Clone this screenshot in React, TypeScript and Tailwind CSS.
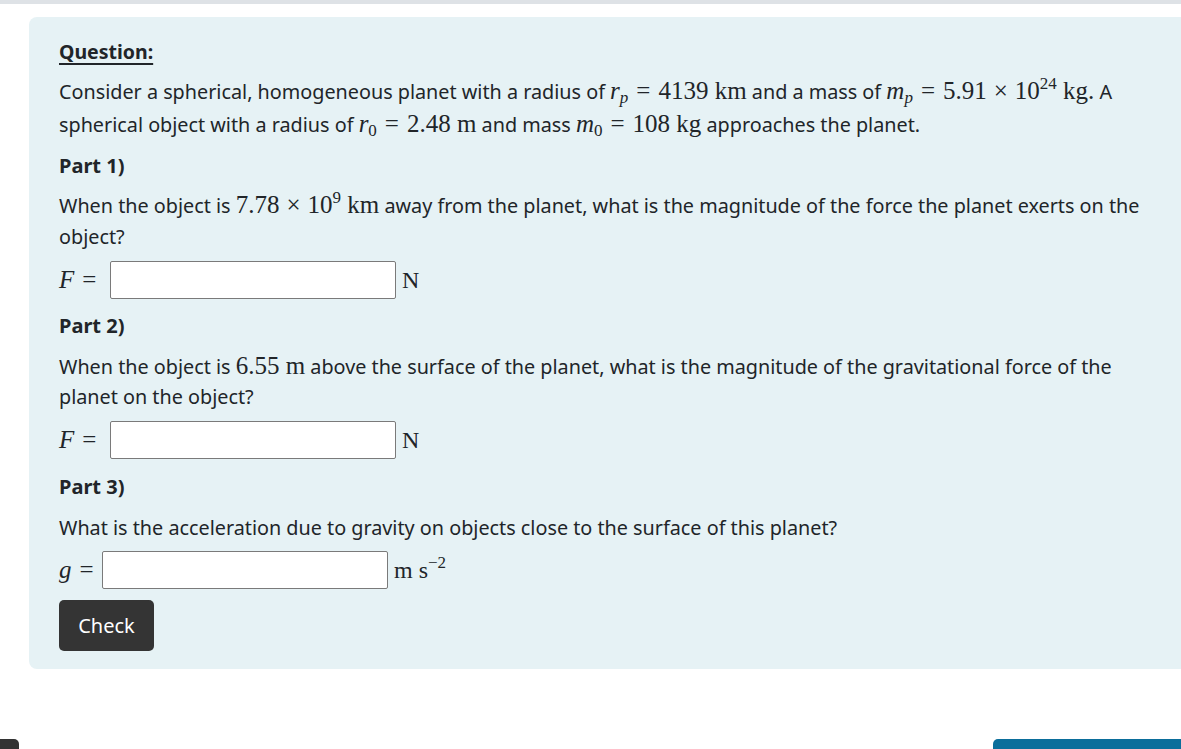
import React from "react";

const serif = "font-['Liberation_Serif','Times_New_Roman',serif]";

function M({ children }: { children: React.ReactNode }) {
  return <span className={`${serif} text-[25px] leading-none whitespace-nowrap`}>{children}</span>;
}

function V({ children }: { children: React.ReactNode }) {
  return <i className="italic">{children}</i>;
}

// relation / binary operator with KaTeX-like spacing
function Op({ children, bin }: { children: React.ReactNode; bin?: boolean }) {
  return <span className={bin ? "mx-[7px]" : "mx-[8px]"}>{children}</span>;
}

function Sub({ children, italic }: { children: React.ReactNode; italic?: boolean }) {
  return (
    <sub className={`text-[17px] relative top-[4px] align-baseline ${italic ? "italic" : ""}`}>{children}</sub>
  );
}

function Sup({ children }: { children: React.ReactNode }) {
  return <sup className="text-[17px] relative -top-[10px] align-baseline">{children}</sup>;
}

function AnswerRow({
  label,
  unit,
  labelWidth,
  top,
}: {
  label: React.ReactNode;
  unit: React.ReactNode;
  labelWidth: string;
  top: string;
}) {
  return (
    <div className={`flex items-center h-[38px] ${top}`}>
      <span className={`${serif} text-[25px] shrink-0 whitespace-nowrap ${labelWidth}`}>{label}</span>
      <input
        type="text"
        className="w-[286px] h-[38px] bg-white border border-[#7a7a7a] rounded-[2px] outline-none px-2"
      />
      <span className={`${serif} text-[24px] pl-[6px]`}>{unit}</span>
    </div>
  );
}

function PartTitle({ children, top }: { children: React.ReactNode; top: string }) {
  return <h3 className={`font-bold text-[20px] leading-[30px] ${top}`}>{children}</h3>;
}

export default function App() {
  return (
    <div className="w-[1181px] h-[749px] bg-white overflow-hidden relative font-['Noto_Sans',sans-serif] text-[#212529]">
      <div className="h-[4px] bg-[#dee2e6]" />
      <div className="ml-[29px] mt-[13px] w-[1170px] rounded-[8px] bg-[#e6f2f5] pl-[30px] pr-[40px] pt-[20px] pb-[18px]">
        <h2 className="font-bold text-[19.5px] leading-[30px] underline underline-offset-[4px] decoration-[2px]">Question:</h2>
        <p className="text-[19.8px] leading-[33px] mt-[8px] w-[1090px]">
          Consider a spherical, homogeneous planet with a radius of{" "}
          <M>
            <V>r</V>
            <Sub italic>p</Sub>
            <Op>=</Op>4139 km
          </M>{" "}
          and a mass of{" "}
          <M>
            <V>m</V>
            <Sub italic>p</Sub>
            <Op>=</Op>5.91<Op bin>×</Op>10<Sup>24</Sup> kg.
          </M>{" "}
          A spherical object with a radius of{" "}
          <M>
            <V>r</V>
            <Sub>0</Sub>
            <Op>=</Op>2.48 m
          </M>{" "}
          and mass{" "}
          <M>
            <V>m</V>
            <Sub>0</Sub>
            <Op>=</Op>108 kg
          </M>{" "}
          approaches the planet.
        </p>

        <PartTitle top="mt-[10px]">Part 1)</PartTitle>
        <p className="text-[19.8px] leading-[31px] mt-[9px] w-[1090px]">
          When the object is{" "}
          <M>
            7.78<Op bin>×</Op>10<Sup>9</Sup> km
          </M>{" "}
          away from the planet, what is the magnitude of the force the planet exerts on the object?
        </p>
        <AnswerRow top="mt-[9px]" labelWidth="w-[51px]" label={<><V>F</V><Op>=</Op></>} unit="N" />

        <PartTitle top="mt-[12px]">Part 2)</PartTitle>
        <p className="text-[19.8px] leading-[30px] mt-[11px] w-[1070px]">
          When the object is <M>6.55 m</M> above the surface of the planet, what is the magnitude of the gravitational force of the planet on the object?
        </p>
        <AnswerRow top="mt-[9px]" labelWidth="w-[51px]" label={<><V>F</V><Op>=</Op></>} unit="N" />

        <PartTitle top="mt-[13px]">Part 3)</PartTitle>
        <p className="text-[19.8px] leading-[30px] mt-[11px]">
          What is the acceleration due to gravity on objects close to the surface of this planet?
        </p>
        <AnswerRow
          top="mt-[8px]"
          labelWidth="w-[43px]"
          label={<><V>g</V><Op>=</Op></>}
          unit={
            <>
              m s<Sup>−2</Sup>
            </>
          }
        />

        <button className="mt-[11px] h-[51px] w-[95px] rounded-[5px] bg-[#343434] text-white text-[20px] block">
          Check
        </button>
      </div>

      <div className="absolute left-0 top-[739px] w-[19px] h-[20px] bg-[#333] rounded-tr-[5px]" />
      <div className="absolute left-[993px] top-[739px] w-[200px] h-[20px] bg-[#0b6e9b] rounded-tl-[5px]" />
    </div>
  );
}
